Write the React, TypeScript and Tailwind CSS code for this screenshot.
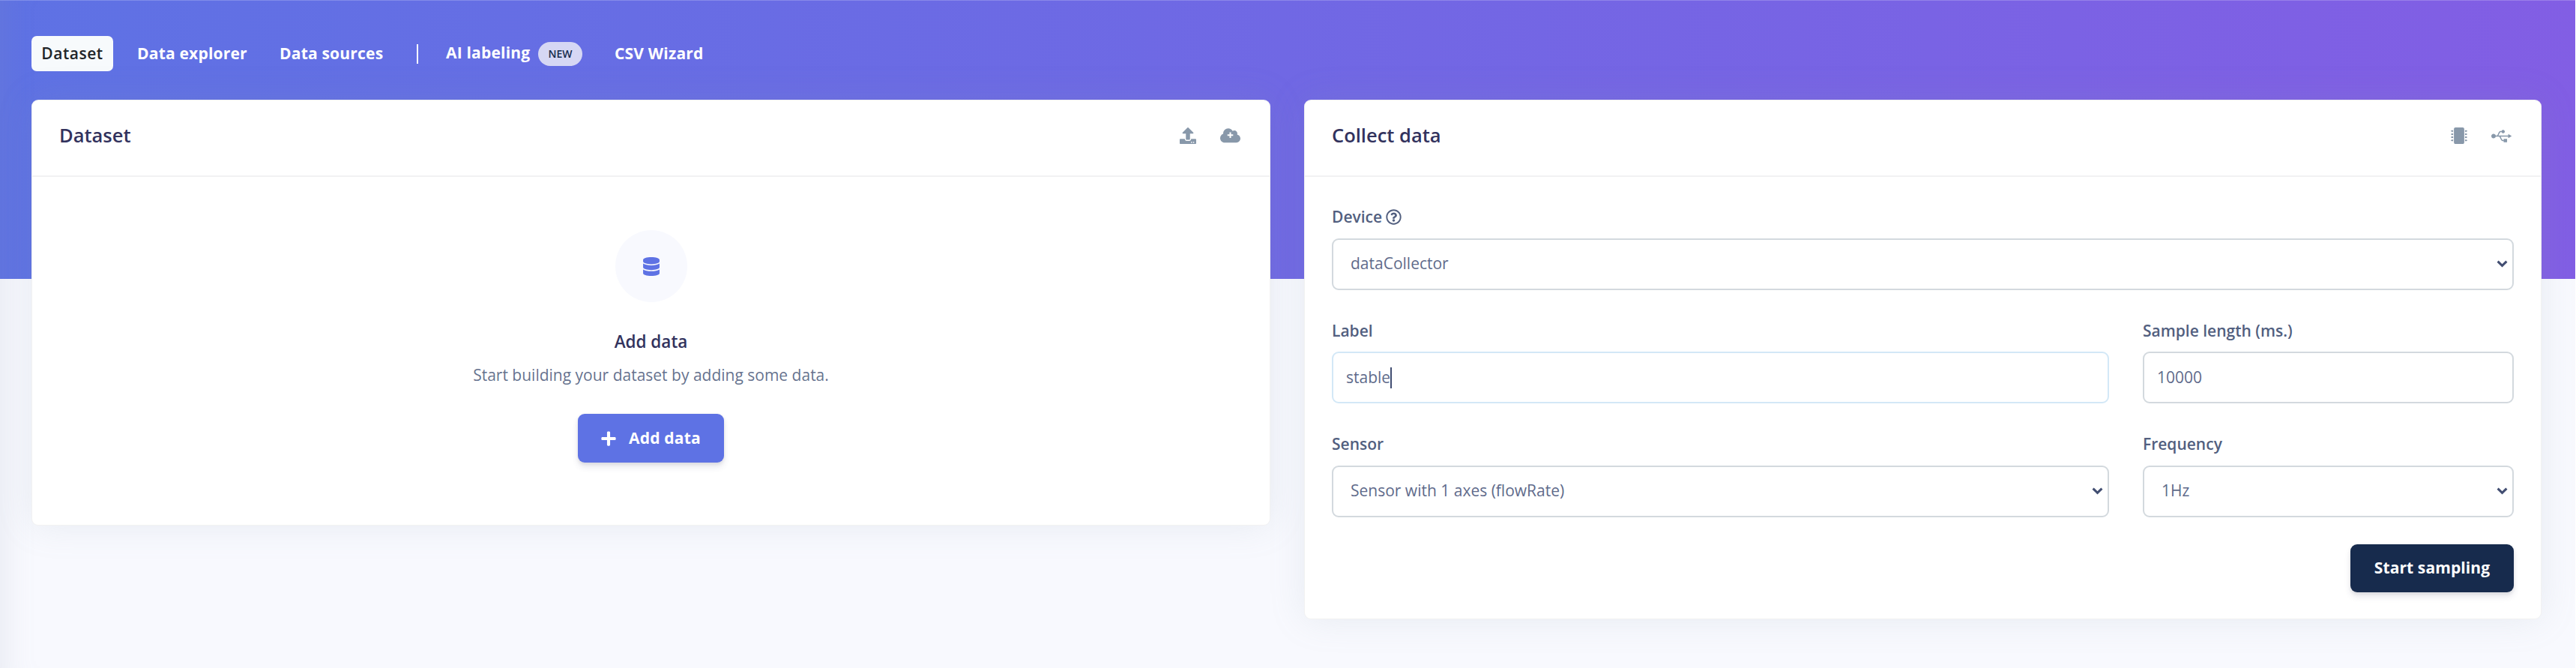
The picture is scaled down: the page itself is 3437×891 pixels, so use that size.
import type { ReactNode } from "react";
import { FaDatabase, FaMicrochip, FaPlus, FaRegQuestionCircle, FaUpload, FaUsb } from "react-icons/fa";

function CloudPlus() {
  return (
    <svg viewBox="0 0 640 512" className="h-[21.6px] w-[27px]" fill="currentColor">
      <path d="M537.6 226.6c4.1-10.7 6.4-22.4 6.4-34.6 0-53-43-96-96-96-19.7 0-38.1 6-53.3 16.2C367 64.2 315.3 32 256 32c-88.4 0-160 71.6-160 160 0 2.7.1 5.4.2 8.1C40.2 219.8 0 273.2 0 336c0 79.5 64.5 144 144 144h368c70.7 0 128-57.3 128-128 0-61.9-44-113.6-102.4-125.4z" />
      <path d="M296 152h48v66h66v48h-66v66h-48v-66h-66v-48h66z" fill="#fff" />
    </svg>
  );
}

function Chevron() {
  return (
    <svg viewBox="0 0 15 10" className="h-[10px] w-[15px]" fill="none" stroke="#414d71" strokeWidth="3">
      <path d="M1.6 1.6 7.5 7.4 13.4 1.6" />
    </svg>
  );
}

function Card({ title, icons, className, children }: { title: string; icons: ReactNode; className: string; children: ReactNode }) {
  return (
    <section className={`flex flex-col rounded-[9px] border border-black/5 bg-white bg-clip-border shadow-[0_0_48px_rgba(136,152,170,0.15)] ${className}`}>
      <header className="flex h-[102px] items-center justify-between border-b-2 border-[#f2f2f3] pr-[39px] pl-[36px]">
        <h3 className="-mt-[9px] text-[25.5px] leading-[38px] font-semibold text-[#32325d]">{title}</h3>
        <div className="-mt-[6px] flex items-center text-[#8898aa]">{icons}</div>
      </header>
      {children}
    </section>
  );
}

function Field({ label, help, children }: { label: string; help?: boolean; children: ReactNode }) {
  return (
    <div>
      <div className="mb-[12px] flex items-center gap-[5px] text-[21px] leading-[31.5px] font-semibold text-[#525f7f]">
        {label}
        {help && <FaRegQuestionCircle className="size-[21px]" />}
      </div>
      {children}
    </div>
  );
}

function SelectBox({ value }: { value: string }) {
  return (
    <div className="flex h-[69px] items-center justify-between rounded-[9px] border-2 border-[#d3d9de] bg-white pr-[6px] pl-[23px] text-[21px] text-[#5f6b8b]">
      {value}
      <Chevron />
    </div>
  );
}

function InputBox({ value, focused }: { value: string; focused?: boolean }) {
  return (
    <div className={`flex h-[69px] items-center rounded-[9px] border-2 bg-white pl-[17px] text-[21px] text-[#5f6b8b] ${focused ? "border-[#d3e8f7]" : "border-[#d3d9de]"}`}>
      {value}
      {focused && <span className="h-[28px] w-[1.5px] bg-[#414d71]" />}
    </div>
  );
}

export default function App() {
  return (
    <div className="flex h-[891px] w-full flex-col overflow-hidden border-r border-white bg-[#f8f9fe] bg-[linear-gradient(87deg,#5e72e4_0%,#825ee4_100%)] bg-[length:100%_372px] bg-no-repeat font-['Open_Sans',sans-serif]">
      <div className="h-px shrink-0 bg-white/20" />
      <div className="flex flex-1 flex-col shadow-[inset_48px_0_48px_-48px_rgba(136,152,170,0.18)]">
        <nav className="mt-[47px] ml-[42px] flex h-[47px] items-center text-[21px] leading-[31.5px] font-bold tracking-[0.2px] text-white">
          <a className="flex h-[47px] w-[109px] items-center justify-center rounded-[7px] bg-[#f7fafc] font-semibold tracking-[0.025em] text-[#212529]">Dataset</a>
          <a className="ml-[32px] w-[190px] whitespace-nowrap">Data explorer</a>
          <a className="w-[183px] whitespace-nowrap">Data sources</a>
          <span className="h-[26px] w-[2px] bg-white" />
          <a className="-mt-[2px] ml-[37px] w-[123px] whitespace-nowrap">AI labeling</a>
          <span className="flex h-[32px] w-[59px] items-center justify-center rounded-full bg-[#d6d7f4] text-[14px] font-semibold tracking-normal text-[#172b4d]">NEW</span>
          <a className="ml-[43px] whitespace-nowrap">CSV Wizard</a>
        </nav>
        <main className="mt-[38px] flex items-start gap-[45px] pr-[45px] pl-[42px]">
          <Card
            title="Dataset"
            className="h-[568px] w-[1653px]"
            icons={
              <>
                <FaUpload className="mr-[32px] size-[22px]" />
                <CloudPlus />
              </>
            }
          >
            <div className="flex flex-col items-center pt-[71px]">
              <div className="flex size-[96px] items-center justify-center rounded-full bg-[#f8f9fe] text-[#5e72e4]">
                <FaDatabase className="h-[25px] w-[22px]" />
              </div>
              <h4 className="mt-[36px] text-[22.5px] leading-[34px] font-semibold text-[#32325d]">Add data</h4>
              <p className="mt-[11px] text-[21px] leading-[32px] text-[#525f7f]/90">Start building your dataset by adding some data.</p>
              <button className="mt-[36px] flex h-[65px] w-[195px] items-center rounded-[9px] bg-[#5e72e4] pl-[30px] text-[21px] font-bold tracking-[0.2px] text-white shadow-[0_6px_9px_rgba(50,50,93,0.11),0_1.5px_4.5px_rgba(0,0,0,0.08)]">
                <FaPlus className="mr-[16px] size-[22px]" />
                Add data
              </button>
            </div>
          </Card>
          <Card
            title="Collect data"
            className="h-[693px] w-[1651px]"
            icons={
              <>
                <FaMicrochip className="mr-[32px] size-[22px]" />
                <FaUsb className="size-[27px]" />
              </>
            }
          >
            <div className="flex flex-col px-[36px] pt-[38px]">
              <Field label="Device" help>
                <SelectBox value="dataCollector" />
              </Field>
              <div className="mt-[39px] grid grid-cols-[1037px_1fr] gap-x-[45px] gap-y-[39px]">
                <Field label="Label">
                  <InputBox value="stable" focused />
                </Field>
                <Field label="Sample length (ms.)">
                  <InputBox value="10000" />
                </Field>
                <Field label="Sensor">
                  <SelectBox value="Sensor with 1 axes (flowRate)" />
                </Field>
                <Field label="Frequency">
                  <SelectBox value="1Hz" />
                </Field>
              </div>
              <button className="mt-[36px] h-[64px] w-[218px] self-end rounded-[9px] bg-[#172b4d] text-[21px] font-bold tracking-[0.1px] text-white shadow-[0_6px_9px_rgba(50,50,93,0.11),0_1.5px_4.5px_rgba(0,0,0,0.08)]">
                Start sampling
              </button>
            </div>
          </Card>
        </main>
      </div>
    </div>
  );
}
